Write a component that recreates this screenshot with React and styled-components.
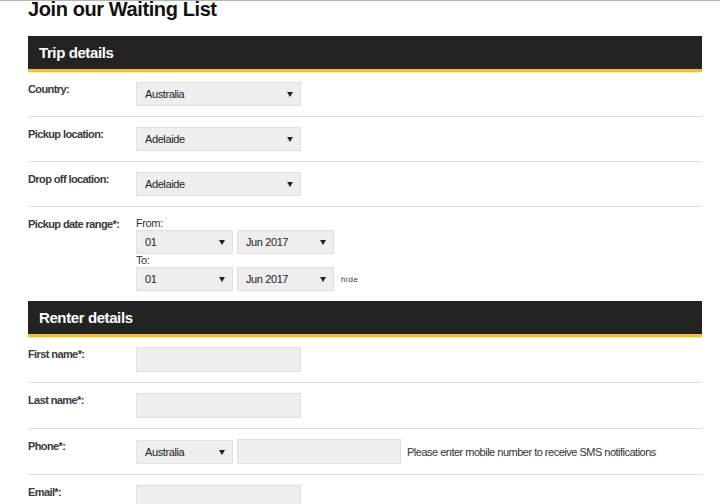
import React from "react";
import styled, { createGlobalStyle } from "styled-components";

const GlobalStyle = createGlobalStyle`
  html, body {
    margin: 0;
    padding: 0;
    background: #fff;
  }
  body {
    font-family: "Liberation Sans", Arial, sans-serif;
    color: #333;
    border-top: 1px solid #b4b4b4;
    overflow: hidden;
  }
`;

const Page = styled.div`
  width: 674px;
  margin-left: 28px;
`;

const Title = styled.h1`
  margin: -2px 0 17px;
  font-size: 20px;
  line-height: 20px;
  font-weight: bold;
  letter-spacing: -0.4px;
  color: #111;
`;

const SectionBar = styled.h2`
  margin: 0;
  height: 33px;
  padding-left: 11px;
  background: #232323;
  border-bottom: 3px solid #f0c22e;
  box-shadow: 0 1px 0 #fae9ad;
  color: #fff;
  font-size: 15px;
  line-height: 34px;
  font-weight: bold;
  letter-spacing: -0.4px;
`;

const Row = styled.div`
  display: grid;
  grid-template-columns: 108px 1fr;
  padding: 10px 0;
  border-bottom: ${(p) => (p.$last ? "none" : "1px solid #dedede")};
`;

const Label = styled.label`
  font-size: 11px;
  line-height: 14px;
  font-weight: bold;
  letter-spacing: -0.6px;
  color: #3a3a3a;
`;

const Field = styled.div`
  display: flex;
  flex-direction: column;
`;

const Line = styled.div`
  display: flex;
  align-items: center;
  gap: ${(p) => p.$gap || 4}px;
`;

const SubLabel = styled.div`
  font-size: 11px;
  line-height: 13px;
  letter-spacing: -0.4px;
  color: #333;
`;

const SelectBox = styled.div`
  position: relative;
  width: ${(p) => p.$w}px;
  height: 24px;

  &::after {
    content: "";
    position: absolute;
    right: 8px;
    top: 10px;
    border-left: 3px solid transparent;
    border-right: 3px solid transparent;
    border-top: 5px solid #222;
    pointer-events: none;
  }
`;

const Select = styled.select`
  appearance: none;
  -webkit-appearance: none;
  box-sizing: border-box;
  width: 100%;
  height: 100%;
  margin: 0;
  padding: 0 20px 0 8px;
  background: #eeeeee;
  border: 1px solid #e0e0e0;
  border-radius: 0;
  font-family: "Liberation Sans", Arial, sans-serif;
  font-size: 11px;
  letter-spacing: -0.4px;
  color: #222;
  outline: none;
`;

const Input = styled.input`
  box-sizing: border-box;
  width: ${(p) => p.$w}px;
  height: 25px;
  margin: 0;
  padding: 0 8px;
  background: #eeeeee;
  border: 1px solid #e0e0e0;
  border-radius: 0;
  outline: none;
`;

const Hide = styled.span`
  font-size: 8px;
  letter-spacing: 0.6px;
  color: #333;
`;

const Hint = styled.span`
  margin-left: 2px;
  font-size: 11px;
  letter-spacing: -0.5px;
  color: #333;
`;

const Dropdown = ({ w, value, options }) => (
  <SelectBox $w={w}>
    <Select defaultValue={value}>
      {(options || [value]).map((o) => (
        <option key={o}>{o}</option>
      ))}
    </Select>
  </SelectBox>
);

const DatePair = () => (
  <Line>
    <Dropdown w={97} value="01" />
    <Dropdown w={97} value="Jun 2017" />
  </Line>
);

export default function App() {
  return (
    <>
      <GlobalStyle />
      <Page>
        <Title>Join our Waiting List</Title>

        <SectionBar>Trip details</SectionBar>
        <Row>
          <Label>Country:</Label>
          <Dropdown w={165} value="Australia" options={["Australia", "New Zealand"]} />
        </Row>
        <Row>
          <Label>Pickup location:</Label>
          <Dropdown w={165} value="Adelaide" />
        </Row>
        <Row>
          <Label>Drop off location:</Label>
          <Dropdown w={165} value="Adelaide" />
        </Row>
        <Row $last>
          <Label>Pickup date range*:</Label>
          <Field>
            <SubLabel>From:</SubLabel>
            <DatePair />
            <SubLabel>To:</SubLabel>
            <Line $gap={7}>
              <DatePair />
              <Hide>hide</Hide>
            </Line>
          </Field>
        </Row>

        <SectionBar>Renter details</SectionBar>
        <Row>
          <Label>First name*:</Label>
          <Input $w={165} />
        </Row>
        <Row>
          <Label>Last name*:</Label>
          <Input $w={165} />
        </Row>
        <Row>
          <Label>Phone*:</Label>
          <Line>
            <Dropdown w={97} value="Australia" />
            <Input $w={164} />
            <Hint>Please enter mobile number to receive SMS notifications</Hint>
          </Line>
        </Row>
        <Row>
          <Label>Email*:</Label>
          <Input $w={165} />
        </Row>
      </Page>
    </>
  );
}
